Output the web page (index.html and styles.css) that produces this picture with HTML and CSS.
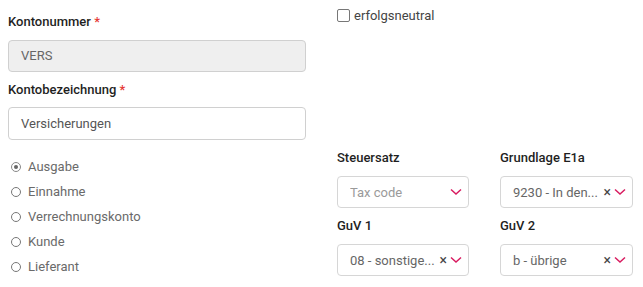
FILE: index.html
```html
<!DOCTYPE html>
<html lang="de">
<head>
    <meta charset="UTF-8">
    <title>Konto</title>
    <link rel="stylesheet" href="styles.css">
</head>
<body>
    <div class="form">
        <div class="col-left">
            <label class="field-label">Kontonummer <span class="req">*</span></label>
            <div class="input disabled">VERS</div>
            <label class="field-label second">Kontobezeichnung <span class="req">*</span></label>
            <div class="input">Versicherungen</div>

            <div class="radios">
                <div class="radio-row"><span class="radio checked"></span>Ausgabe</div>
                <div class="radio-row"><span class="radio"></span>Einnahme</div>
                <div class="radio-row"><span class="radio"></span>Verrechnungskonto</div>
                <div class="radio-row"><span class="radio"></span>Kunde</div>
                <div class="radio-row"><span class="radio"></span>Lieferant</div>
            </div>
        </div>

        <div class="col-right">
            <div class="check-row"><span class="checkbox"></span>erfolgsneutral</div>

            <div class="select-grid">
                <div class="sel-field">
                    <label class="field-label">Steuersatz</label>
                    <div class="select">
                        <span class="sel-value placeholder">Tax code</span>
                        <svg class="chev" width="12" height="8" viewBox="0 0 12 8"><path d="M1 1.5 L6 6 L11 1.5" fill="none" stroke="#d81b60" stroke-width="1.5"/></svg>
                    </div>
                </div>
                <div class="sel-field">
                    <label class="field-label">Grundlage E1a</label>
                    <div class="select">
                        <span class="sel-value">9230 - In den...</span>
                        <span class="clear">&times;</span>
                        <svg class="chev" width="12" height="8" viewBox="0 0 12 8"><path d="M1 1.5 L6 6 L11 1.5" fill="none" stroke="#d81b60" stroke-width="1.5"/></svg>
                    </div>
                </div>
                <div class="sel-field">
                    <label class="field-label">GuV 1</label>
                    <div class="select">
                        <span class="sel-value">08 - sonstige...</span>
                        <span class="clear">&times;</span>
                        <svg class="chev" width="12" height="8" viewBox="0 0 12 8"><path d="M1 1.5 L6 6 L11 1.5" fill="none" stroke="#d81b60" stroke-width="1.5"/></svg>
                    </div>
                </div>
                <div class="sel-field">
                    <label class="field-label">GuV 2</label>
                    <div class="select">
                        <span class="sel-value">b - übrige</span>
                        <span class="clear">&times;</span>
                        <svg class="chev" width="12" height="8" viewBox="0 0 12 8"><path d="M1 1.5 L6 6 L11 1.5" fill="none" stroke="#d81b60" stroke-width="1.5"/></svg>
                    </div>
                </div>
            </div>
        </div>
    </div>
</body>
</html>
```

FILE: styles.css
```css
body { margin: 0; font-family: Roboto, "Liberation Sans", sans-serif; color: #222; background: #fff; }
.form { display: flex; padding-top: 13px; }
.col-left { width: 298px; margin-left: 8px; }
.col-right { width: 297px; margin-left: 31px; margin-top: -5px; }

.field-label { display: block; font-size: 13px; font-weight: 500; line-height: 18px; color: #1f1f1f; }
.field-label.second { margin-top: 9px; }
.req { color: #e53935; }

.input { box-sizing: border-box; height: 32px; margin-top: 9px; border: 1px solid #d0d0d0; border-radius: 4px; padding: 0 12px; font-size: 13px; line-height: 30px; color: #555; }
.input.disabled { background: #efefef; color: #666; }
.field-label.second + .input { margin-top: 8px; height: 33px; line-height: 31px; }

.radios { margin-top: 14px; }
.radio-row { display: flex; align-items: center; height: 25px; font-size: 13px; color: #6a6a6a; }
.radio { box-sizing: border-box; width: 10px; height: 10px; border: 1px solid #777; border-radius: 50%; margin: 0 7px 0 3px; position: relative; }
.radio.checked { border-color: #888; }
.radio.checked::after { content: ""; position: absolute; left: 2px; top: 2px; width: 4px; height: 4px; border-radius: 50%; background: #666; }

.check-row { display: flex; align-items: center; height: 14px; font-size: 13px; color: #444; }
.checkbox { box-sizing: border-box; width: 13px; height: 13px; border: 1px solid #777; border-radius: 2px; margin-right: 4px; }

.select-grid { display: grid; grid-template-columns: 132px 133px; column-gap: 31px; row-gap: 9px; margin-top: 127px; }
.select { box-sizing: border-box; display: flex; align-items: center; height: 32px; margin-top: 9px; border: 1px solid #d6d6d6; border-radius: 4px; padding: 0 6px 0 12px; font-size: 13px; color: #666; }
.sel-value { flex: 1; white-space: nowrap; overflow: hidden; }
.sel-value.placeholder { color: #9a9a9a; }
.clear { font-size: 14px; color: #444; margin-right: 3px; }
.chev { flex: none; }
```
